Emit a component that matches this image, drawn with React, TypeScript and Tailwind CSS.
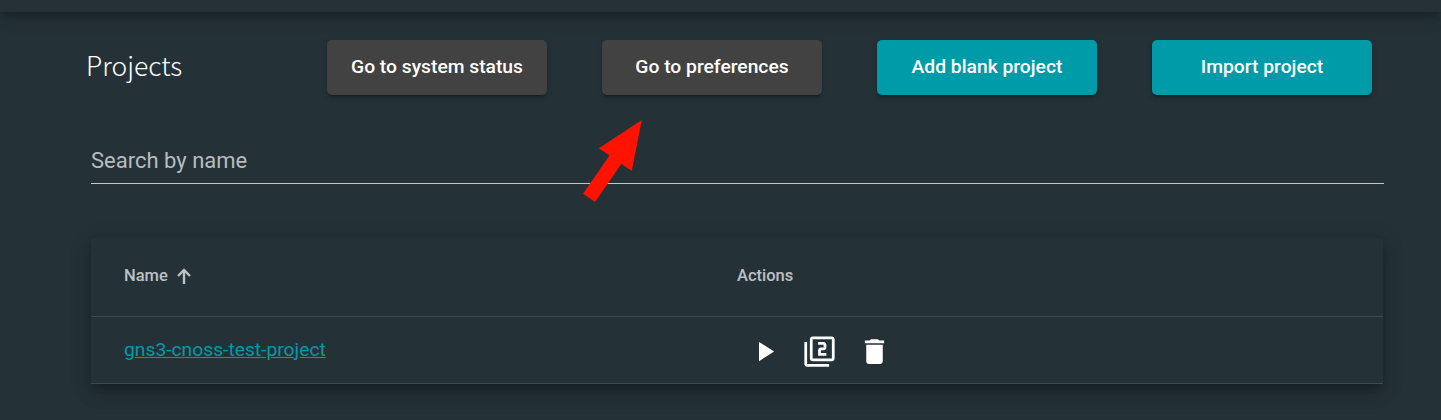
import type { ReactNode } from "react";

function ActionButton({ label, primary = false }: { label: string; primary?: boolean }) {
  return (
    <button
      className={`h-[55px] w-[220px] rounded-[5px] text-[19.25px] font-medium whitespace-nowrap text-white shadow-[0_4px_1px_-3px_rgba(0,0,0,0.2),0_3px_3px_0_rgba(0,0,0,0.14),0_1px_7px_0_rgba(0,0,0,0.12)] ${
        primary ? "bg-[#009ba9]" : "bg-[#424242]"
      }`}
    >
      {label}
    </button>
  );
}

function IconButton({ label, children }: { label: string; children: ReactNode }) {
  return (
    <button aria-label={label} className="flex size-[55px] items-center justify-center text-white">
      <svg viewBox="0 0 24 24" className="size-[33px]" fill="currentColor">
        {children}
      </svg>
    </button>
  );
}

export default function App() {
  return (
    <div className="h-[420px] overflow-hidden bg-[#243238] font-['Roboto',sans-serif]">
      <header className="relative h-3 bg-[#243238] shadow-[0_4px_6px_-1px_rgba(0,0,0,0.2),0_7px_14px_0_rgba(0,0,0,0.14),0_1px_25px_0_rgba(0,0,0,0.12)]" />

      <main className="pl-[91px]">
        <div className="flex pt-7">
          <h1 className="-ml-[5px] w-[241px] pt-[8px] font-['Noto_Sans_CJK_SC',sans-serif] text-[26.5px] leading-[34px] font-light text-white">
            Projects
          </h1>
          <div className="flex gap-[55px]">
            <ActionButton label="Go to system status" />
            <ActionButton label="Go to preferences" />
            <ActionButton label="Add blank project" primary />
            <ActionButton label="Import project" primary />
          </div>
        </div>

        <div className="mt-[49px] flex h-10 w-[1293px] border-b border-[#c4c4cc]">
          <input
            placeholder="Search by name"
            className="h-8 w-full bg-transparent text-[22px] text-white outline-none placeholder:text-[#b8bcbe]"
          />
        </div>

        <section className="mt-[54px] w-[1292px] bg-[#243238] shadow-[0_7px_7px_-4px_rgba(0,0,0,0.2),0_11px_14px_1px_rgba(0,0,0,0.14),0_4px_19px_3px_rgba(0,0,0,0.12)]">
          <div className="grid h-[79px] grid-cols-[613px_1fr] border-b border-[#3f4a4f] pl-[33px] text-[16.5px] leading-[76px] font-medium text-[#bec1c3]">
            <div className="flex h-[76px] items-center">
              <span>Name</span>
              <svg viewBox="0 0 14 16" className="ml-[9px] h-4 w-[14px]" fill="none" stroke="currentColor" strokeWidth="2.4">
                <path d="M7 16V2M1 8L7 2L13 8" />
              </svg>
            </div>
            <span>Actions</span>
          </div>
          <div className="grid h-[67px] grid-cols-[613px_1fr] border-b border-[#3f4a4f] pl-[33px]">
            <a className="text-[19.25px] leading-[65px] text-[#009ba9] underline" href="#">
              gns3-cnoss-test-project
            </a>
            <div className="flex items-center pt-[3px]">
              <IconButton label="Open project">
                <path d="M8 5v14l11-7z" />
              </IconButton>
              <IconButton label="Duplicate project">
                <path d="M3 5H1v16c0 1.100.9 2 2 2h16v-2H3V5zm18-4H7c-1.100 0-2 .9-2 2v14c0 1.100.9 2 2 2h14c1.100 0 2-.9 2-2V3c0-1.100-.9-2-2-2zm0 16H7V3h14v14zm-4-4h-4v-2h2c1.100 0 2-.890 2-2V7c0-1.110-.9-2-2-2h-4v2h4v2h-2c-1.100 0-2 .890-2 2v4h6v-2z" />
              </IconButton>
              <IconButton label="Delete project">
                <path d="M6 19c0 1.100.9 2 2 2h8c1.100 0 2-.9 2-2V7H6v12zM19 4h-3.500l-1-1h-5l-1 1H5v2h14V4z" />
              </IconButton>
            </div>
          </div>
        </section>
      </main>

      <svg viewBox="0 0 60 83" className="pointer-events-none absolute top-[120px] left-[583px] h-[83px] w-[60px]" fill="#ff1200">
        <path d="M58.800 0L48.800 50.800L38.300 44L12 82L0 73.700L26.500 35.400L15.800 28.300Z" />
      </svg>
    </div>
  );
}
